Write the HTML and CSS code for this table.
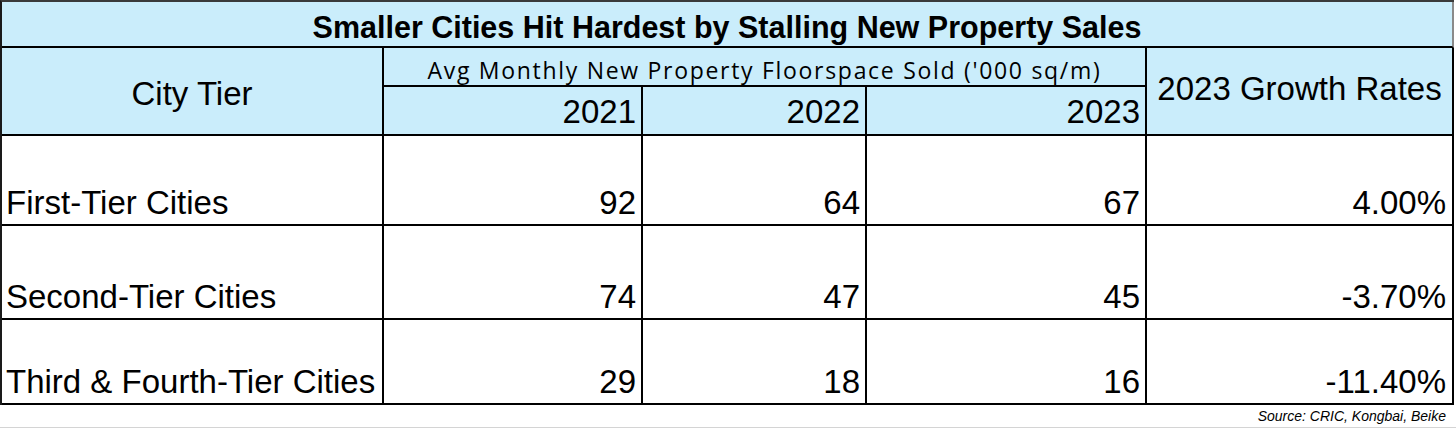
FILE: index.html
```html
<!DOCTYPE html>
<html lang="en">
<head>
<meta charset="utf-8">
<title>Smaller Cities Hit Hardest by Stalling New Property Sales</title>
<link rel="stylesheet" href="styles.css">
</head>
<body>
<div class="sheet">
  <div class="table">
    <div class="cell head title">Smaller Cities Hit Hardest by Stalling New Property Sales</div>
    <div class="cell head tier">City Tier</div>
    <div class="cell head sub">Avg Monthly New Property Floorspace Sold ('000 sq/m)</div>
    <div class="cell head growth">2023 Growth Rates</div>
    <div class="cell head year">2021</div>
    <div class="cell head year">2022</div>
    <div class="cell head year">2023</div>

    <div class="cell label">First-Tier Cities</div>
    <div class="cell num">92</div>
    <div class="cell num">64</div>
    <div class="cell num">67</div>
    <div class="cell num pct">4.00%</div>

    <div class="cell label">Second-Tier Cities</div>
    <div class="cell num">74</div>
    <div class="cell num">47</div>
    <div class="cell num">45</div>
    <div class="cell num pct">-3.70%</div>

    <div class="cell label">Third &amp; Fourth-Tier Cities</div>
    <div class="cell num">29</div>
    <div class="cell num">18</div>
    <div class="cell num">16</div>
    <div class="cell num pct">-11.40%</div>
  </div>
  <div class="source">Source: CRIC, Kongbai, Beike</div>
  <div class="gridlines"><span></span><span></span><span></span><span></span><span></span></div>
</div>
</body>
</html>
```

FILE: styles.css
```css
html, body {
  margin: 0;
  padding: 0;
  background: #ffffff;
}

body {
  font-family: "Liberation Sans", Arial, sans-serif;
  color: #000000;
  width: 1456px;
  height: 428px;
  overflow: hidden;
}

.sheet {
  width: 1456px;
}

.table {
  display: grid;
  grid-template-columns: 382px 259px 224px 280px 307px;
  grid-template-rows: 46px 39px 49px 90px 94px 85px;
  width: 1452px;
  border-left: 2px solid #1a1a1a;
  border-top: 2px solid #3a3a3a;
}

.cell {
  box-sizing: border-box;
  border-right: 2px solid #000000;
  border-bottom: 2px solid #000000;
  display: flex;
  font-size: 33px;
  line-height: 33px;
  white-space: nowrap;
}

.head {
  background: #caedfb;
}

.title {
  grid-column: 1 / 6;
  justify-content: center;
  align-items: flex-end;
  padding-bottom: 4px;
  font-weight: bold;
  font-size: 30.5px;
  line-height: 30.5px;
  border-right-color: #8a8a8a;
}

.tier {
  grid-column: 1;
  grid-row: 2 / 4;
  justify-content: center;
  align-items: center;
  padding-top: 4px;
}

.sub {
  grid-column: 2 / 5;
  grid-row: 2;
  justify-content: center;
  align-items: flex-end;
  padding-bottom: 3px;
  font-family: "Open Sans", "Liberation Sans", sans-serif;
  font-size: 23px;
  line-height: 23px;
  letter-spacing: 1.7px;
}

.growth {
  grid-column: 5;
  grid-row: 2 / 4;
  justify-content: center;
  align-items: center;
  padding-bottom: 6px;
}

.year {
  grid-row: 3;
  justify-content: flex-end;
  align-items: flex-end;
  padding-right: 5px;
  padding-bottom: 6px;
}

.label {
  align-items: flex-end;
  padding-left: 4px;
  padding-bottom: 5px;
}

.num {
  justify-content: flex-end;
  align-items: flex-end;
  padding-right: 5px;
  padding-bottom: 5px;
}

.pct {
  padding-right: 6px;
}

.source {
  height: 22px;
  line-height: 22px;
  font-size: 14px;
  font-style: italic;
  text-align: right;
  padding-right: 10px;
  border-bottom: 1px solid #d4d4d4;
}

.gridlines {
  display: grid;
  grid-template-columns: 384px 259px 224px 280px 307px;
  height: 6px;
}

.gridlines span {
  border-left: 1px solid #d4d4d4;
}

.gridlines span:first-child {
  border-left: none;
}
```
